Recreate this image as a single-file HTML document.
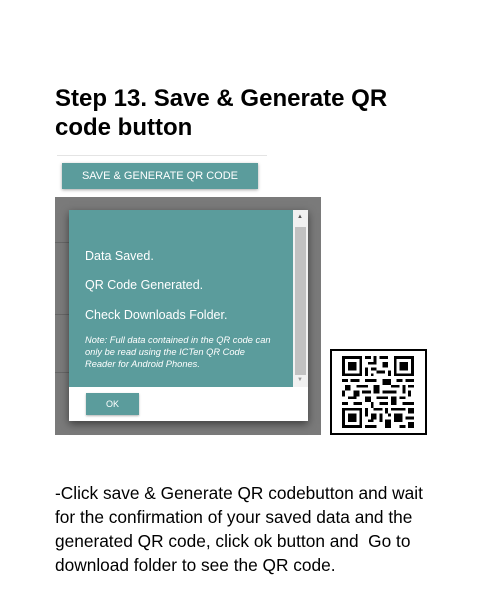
<!DOCTYPE html>
<html><head><meta charset="utf-8"><style>
body{margin:0;width:500px;height:600px;background:#fff;position:relative;overflow:hidden;font-family:"Liberation Sans",sans-serif}
.t{position:absolute;left:55px;top:84px;font-size:24px;font-weight:bold;line-height:29px;color:#000}
.line{position:absolute;left:57px;top:155px;width:210px;height:1px;background:#e4e4e4}
.btn{position:absolute;left:62px;top:163px;width:196px;height:26px;background:#5b9c9c;color:#fff;font-size:11px;text-align:center;line-height:26px;box-shadow:0 1px 3px rgba(0,0,0,.35)}
.gray{position:absolute;left:55px;top:197px;width:266px;height:238px;background:#7a7a7a}
.gl{position:absolute;left:0;width:14px;height:1px;background:#666}
.dlg{position:absolute;left:69px;top:210px;width:239px;height:211px;background:#fff;box-shadow:0 3px 8px rgba(0,0,0,.5)}
.teal{position:absolute;left:0;top:0;width:224px;height:177px;background:#5b9c9c;color:#fff}
.sb{position:absolute;left:224px;top:0;width:15px;height:177px;background:#f1f1f1}
.th{position:absolute;left:2px;top:17px;width:11px;height:148px;background:#c1c1c1}
.p{position:absolute;left:16px;font-size:12.5px}
.n{position:absolute;left:16px;top:124px;font-size:9.3px;font-style:italic;line-height:12px}
.ok{position:absolute;left:17px;top:183px;width:53px;height:22px;background:#5b9c9c;color:#fff;font-size:9px;text-align:center;line-height:22px;box-shadow:0 1px 2px rgba(0,0,0,.3)}
.qr{position:absolute;left:330px;top:349px;width:93px;height:82px;border:2px solid #000;background:#fff}
.b{position:absolute;left:55px;top:481px;font-size:17.3px;line-height:24px;color:#000}
</style></head><body>
<div class="t">Step 13. Save &amp; Generate QR<br>code button</div>
<div class="line"></div>
<div class="btn">SAVE &amp; GENERATE QR CODE</div>
<div class="gray"><div class="gl" style="top:45px"></div><div class="gl" style="top:117px"></div><div class="gl" style="top:175px"></div></div>
<div class="dlg">
<div class="teal">
<div class="p" style="top:39px">Data Saved.</div>
<div class="p" style="top:68px">QR Code Generated.</div>
<div class="p" style="top:98px">Check Downloads Folder.</div>
<div class="n">Note: Full data contained in the QR code can<br>only be read using the ICTen QR Code<br>Reader for Android Phones.</div>
</div>
<div class="sb"><div style="position:absolute;left:4px;top:4px;font-size:6px;color:#555">▲</div><div class="th"></div><div style="position:absolute;left:4px;top:167px;font-size:6px;color:#999">▼</div></div>
<div class="ok">OK</div>
</div>
<div class="qr">
<svg style="position:absolute;left:8px;top:5px" width="76" height="72" viewBox="0 0 25 25" shape-rendering="crispEdges">
<g fill="#000">
<path d="M0 0h7v7h-7zM18 0h7v7h-7zM0 18h7v7h-7z"/>
<path fill="#fff" d="M1 1h5v5h-5zM19 1h5v5h-5zM1 19h5v5h-5z"/>
<path d="M2 2h3v3h-3zM20 2h3v3h-3zM2 20h3v3h-3z"/>
<path d="M8 0h2v1h-2zM11 0h1v2h-1zM13 0h3v1h-3zM9 2h3v1h-3zM14 2h2v2h-2zM8 4h1v3h-1zM10 4h2v1h-2zM12 5h3v1h-3zM16 5h1v2h-1zM10 6h1v1h-1zM0 8h2v1h-2zM3 8h3v1h-3zM8 8h4v1h-4zM14 8h3v2h-3zM19 8h2v1h-2zM22 8h3v1h-3zM1 10h2v2h-2zM5 10h4v1h-4zM11 10h2v3h-2zM17 10h3v1h-3zM21 10h1v3h-1zM23 10h2v1h-2zM0 12h1v2h-1zM4 12h2v2h-2zM7 12h3v1h-3zM14 12h5v1h-5zM23 12h1v2h-1zM2 14h3v1h-3zM8 14h2v2h-2zM12 14h4v1h-4zM17 14h2v3h-2zM20 14h2v1h-2zM0 16h2v1h-2zM4 16h3v1h-3zM10 16h1v2h-1zM13 16h3v1h-3zM21 16h4v1h-4zM8 18h1v3h-1zM11 18h3v1h-3zM15 18h1v2h-1zM17 18h5v1h-5zM23 18h2v2h-2zM10 20h2v2h-2zM13 20h1v3h-1zM16 20h1v1h-1zM18 20h3v3h-3zM22 21h3v1h-3zM9 22h2v1h-2zM15 22h2v3h-2zM8 24h4v1h-4zM20 24h2v1h-2zM23 23h2v2h-2z"/>
</g></svg>
</div>
<div class="b">-Click save &amp; Generate QR codebutton and wait<br>for the confirmation of your saved data and the<br>generated QR code, click ok button and&nbsp; Go to<br>download folder to see the QR code.</div>
</body></html>
